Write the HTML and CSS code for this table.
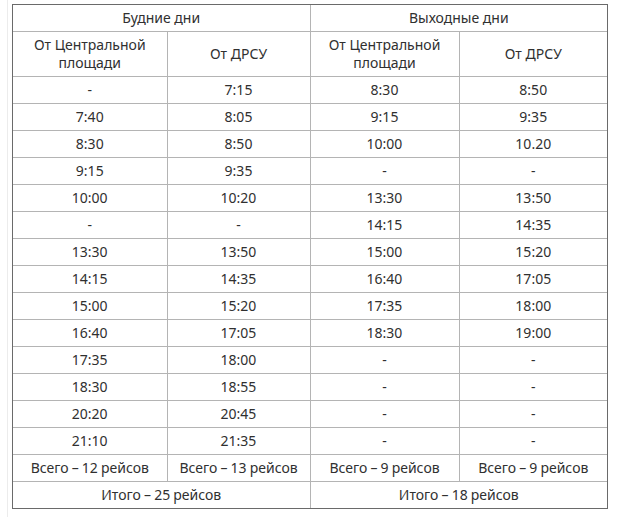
FILE: index.html
```html
<!DOCTYPE html>
<html lang="ru">
<head>
<meta charset="utf-8">
<link rel="stylesheet" href="styles.css">
</head>
<body>
<div class="page">
  <div class="frame">
    <table class="schedule">
      <colgroup>
        <col class="c1"><col class="c2"><col class="c3"><col class="c4">
      </colgroup>
      <tr class="h1"><td colspan="2">Будние дни</td><td colspan="2">Выходные дни</td></tr>
      <tr class="h2"><td>От Центральной<br>площади</td><td>От ДРСУ</td><td>От Центральной<br>площади</td><td>От ДРСУ</td></tr>
      <tr><td>-</td><td>7:15</td><td>8:30</td><td>8:50</td></tr>
      <tr><td>7:40</td><td>8:05</td><td>9:15</td><td>9:35</td></tr>
      <tr><td>8:30</td><td>8:50</td><td>10:00</td><td>10.20</td></tr>
      <tr><td>9:15</td><td>9:35</td><td>-</td><td>-</td></tr>
      <tr><td>10:00</td><td>10:20</td><td>13:30</td><td>13:50</td></tr>
      <tr><td>-</td><td>-</td><td>14:15</td><td>14:35</td></tr>
      <tr><td>13:30</td><td>13:50</td><td>15:00</td><td>15:20</td></tr>
      <tr><td>14:15</td><td>14:35</td><td>16:40</td><td>17:05</td></tr>
      <tr><td>15:00</td><td>15:20</td><td>17:35</td><td>18:00</td></tr>
      <tr><td>16:40</td><td>17:05</td><td>18:30</td><td>19:00</td></tr>
      <tr><td>17:35</td><td>18:00</td><td>-</td><td>-</td></tr>
      <tr><td>18:30</td><td>18:55</td><td>-</td><td>-</td></tr>
      <tr><td>20:20</td><td>20:45</td><td>-</td><td>-</td></tr>
      <tr><td>21:10</td><td>21:35</td><td>-</td><td>-</td></tr>
      <tr class="totals"><td>Всего – 12 рейсов</td><td>Всего – 13 рейсов</td><td>Всего – 9 рейсов</td><td>Всего – 9 рейсов</td></tr>
      <tr class="totals"><td colspan="2">Итого – 25 рейсов</td><td colspan="2">Итого – 18 рейсов</td></tr>
    </table>
  </div>
</div>
</body>
</html>
```
FILE: styles.css
```css
html, body {
  margin: 0;
  padding: 0;
  background: #ffffff;
}
.page {
  margin-left: 7px;
  border-left: 1px solid #ececec;
  padding: 4px 0 0 4px;
  height: 513px;
}
.frame {
  width: 594px;
  border: 1px solid #6a6a6a;
}
.schedule {
  width: 594px;
  border-collapse: collapse;
  border-style: hidden;
  table-layout: fixed;
  font-family: "Noto Sans", "Open Sans", sans-serif;
  font-size: 14px;
  color: #303030;
}
.c1 { width: 154px; }
.c2 { width: 143px; }
.c3 { width: 149px; }
.c4 { width: 148px; }
.schedule td {
  border: 1px solid #b4b4b4;
  text-align: center;
  vertical-align: middle;
  padding: 0 4px;
  height: 26px;
  line-height: 18px;
}
.schedule .h2 td {
  height: 44px;
}
.schedule .totals td {
  word-spacing: -0.5px;
}
```
